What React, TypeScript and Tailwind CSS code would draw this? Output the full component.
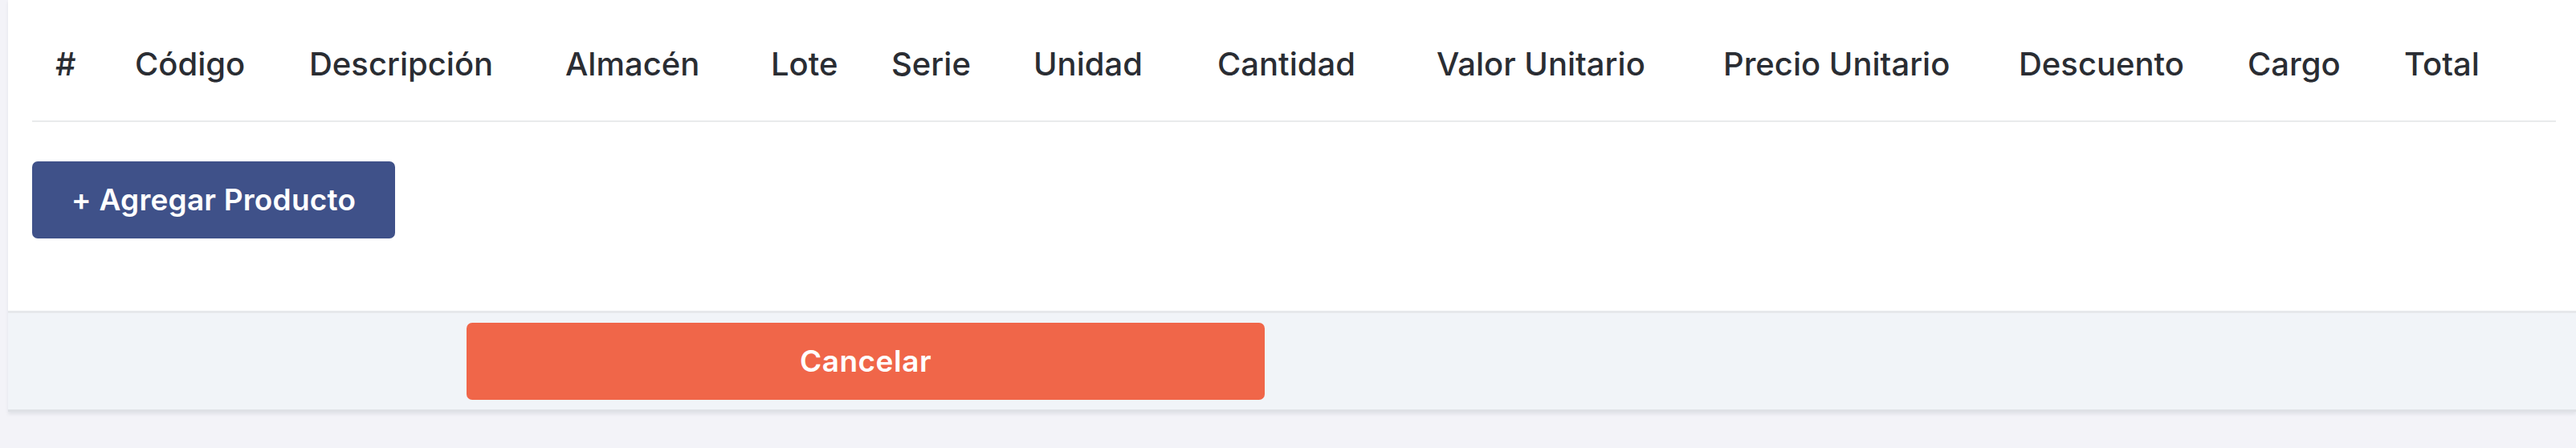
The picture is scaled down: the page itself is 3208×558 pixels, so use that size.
const columns = [
  { label: "#", width: "w-[99px]" },
  { label: "Código", width: "w-[217px]" },
  { label: "Descripción", width: "w-[319px]" },
  { label: "Almacén", width: "w-[256px]" },
  { label: "Lote", width: "w-[150px]" },
  { label: "Serie", width: "w-[177px]" },
  { label: "Unidad", width: "w-[229px]" },
  { label: "Cantidad", width: "w-[273px]" },
  { label: "Valor Unitario", width: "w-[357px]" },
  { label: "Precio Unitario", width: "w-[368px]" },
  { label: "Descuento", width: "w-[285px]" },
  { label: "Cargo", width: "w-[195px]" },
  { label: "Total", width: "w-[218px]" },
];

function ProductTable() {
  return (
    <table className="w-[3143px] table-fixed border-collapse">
      <colgroup>
        {columns.map((col) => (
          <col key={col.label} className={col.width} />
        ))}
      </colgroup>
      <thead>
        <tr className="border-b-2 border-[#e9ebec]">
          {columns.map((col) => (
            <th
              key={col.label}
              className="pb-[40px] pl-[29px] pt-[50px] text-left text-[40px] font-medium leading-[60px] whitespace-nowrap text-[#2a2d33]"
            >
              {col.label}
            </th>
          ))}
        </tr>
      </thead>
      <tbody></tbody>
    </table>
  );
}

export default function App() {
  return (
    <div
      className="h-[558px] w-[3208px] overflow-hidden bg-[#f3f3f8] pl-[10px]"
      style={{ fontFamily: "Inter, 'Noto Sans', sans-serif" }}
    >
      <div className="w-full bg-white shadow-[0_3px_4px_rgba(30,32,60,0.08)]">
        <div className="px-[30px] pb-[90px]">
          <ProductTable />
          <button className="mt-[49px] flex h-[96px] w-[452px] items-center justify-center rounded-[7px] bg-[#3f5189] text-[37px] font-semibold tracking-[0.2px] text-white">
            + Agregar Producto
          </button>
        </div>
        <div className="flex h-[126px] items-center border-y-[3px] border-t-[#e6e8eb] border-b-[#dfe1e6] bg-[#f1f4f8] pl-[571px]">
          <button className="h-[96px] w-[994px] rounded-[7px] bg-[#f06649] text-[37px] font-semibold tracking-[0.5px] text-white">
            Cancelar
          </button>
        </div>
      </div>
    </div>
  );
}
